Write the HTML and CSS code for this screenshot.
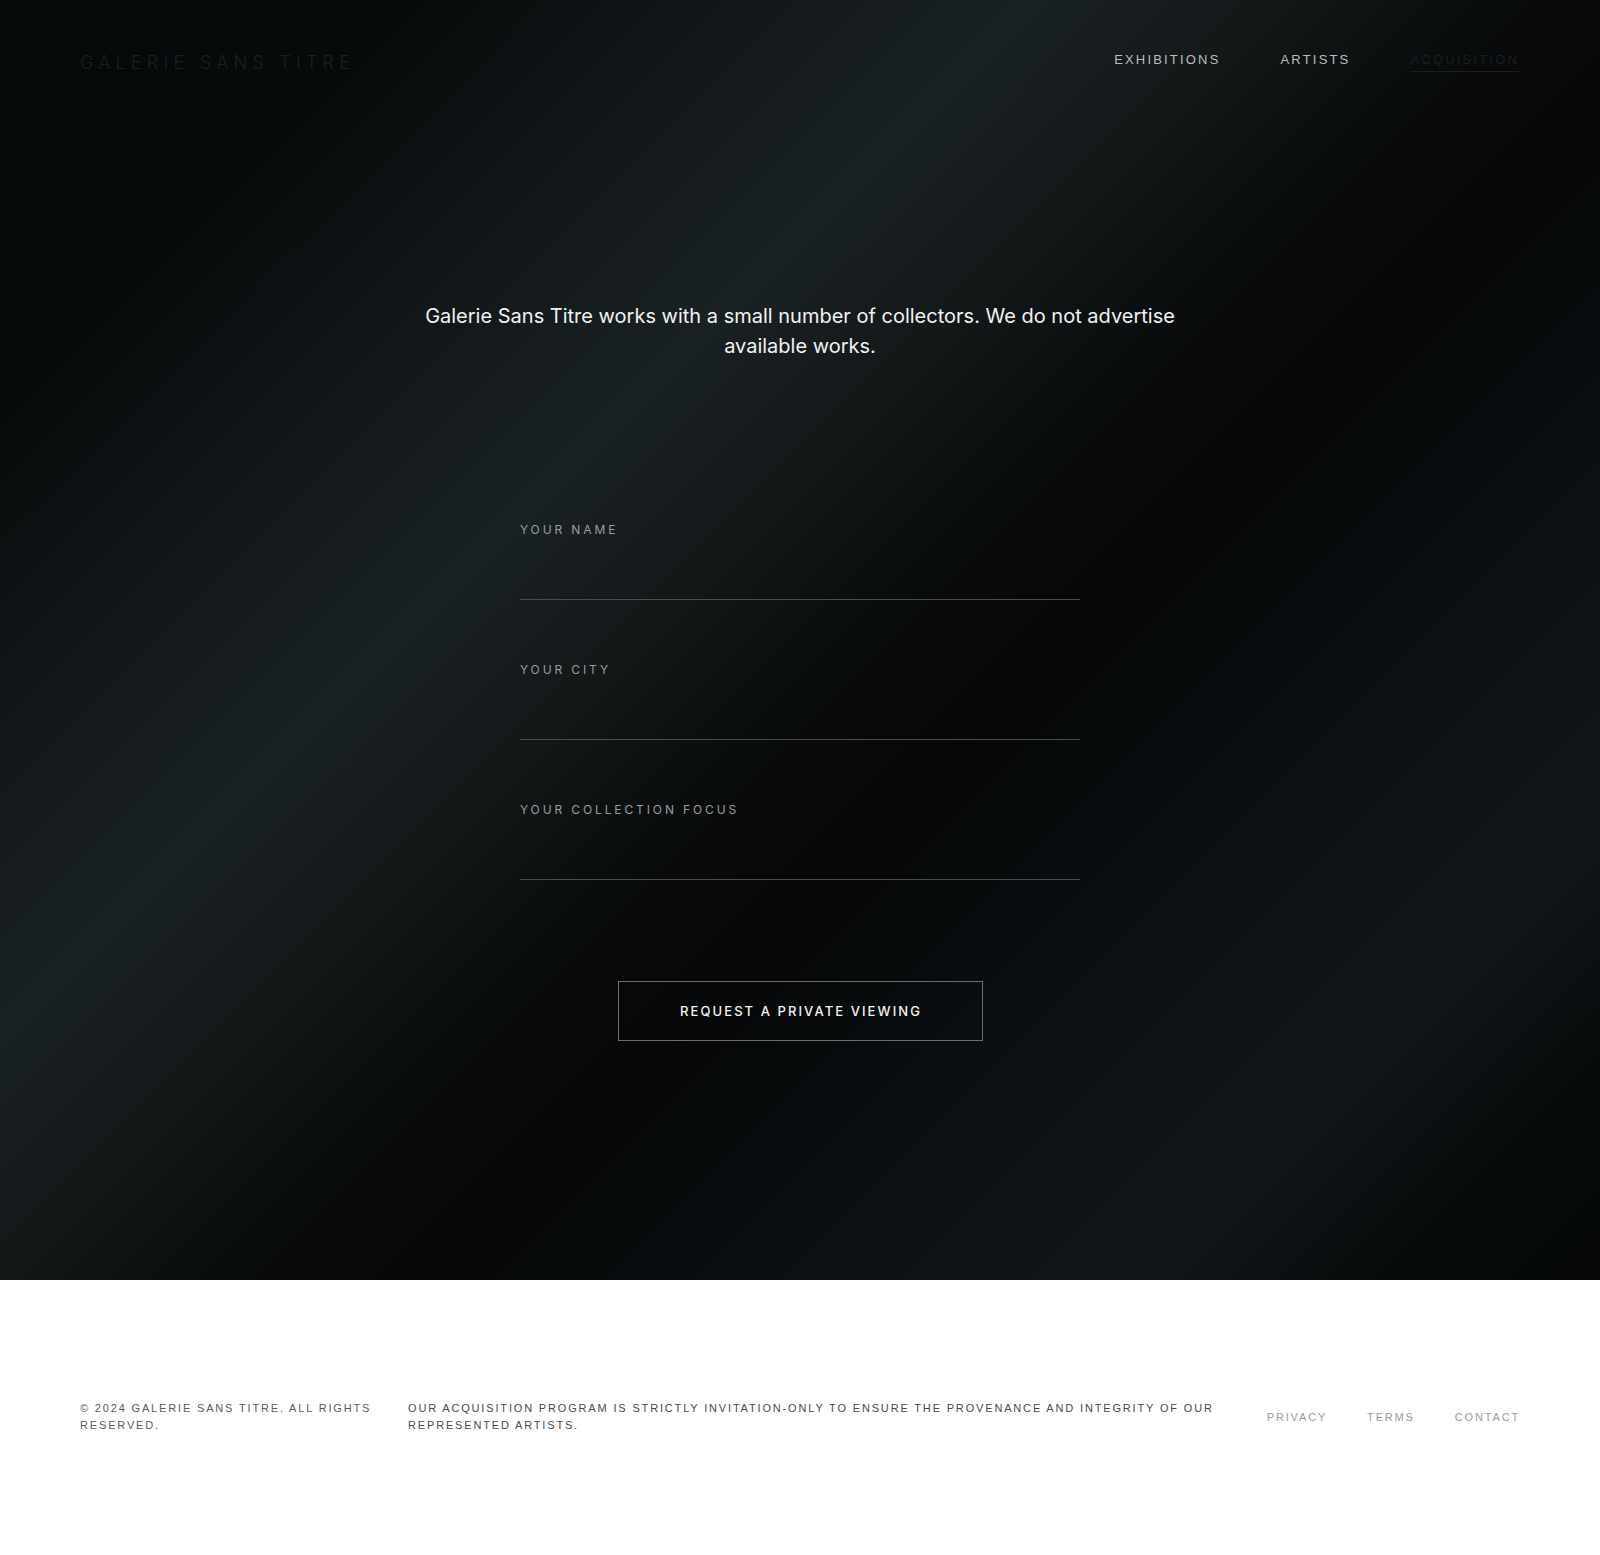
FILE: index.html
```html
<!DOCTYPE html>
<html lang="en">
<head>
<meta charset="utf-8">
<title>Galerie Sans Titre — Acquisition</title>
<link rel="stylesheet" href="styles.css">
</head>
<body>
<section class="hero">
  <header class="site-header">
    <div class="logo">GALERIE SANS TITRE</div>
    <nav class="nav">
      <a class="nav-link" href="#">EXHIBITIONS</a>
      <a class="nav-link" href="#">ARTISTS</a>
      <a class="nav-link is-active" href="#">ACQUISITION</a>
    </nav>
  </header>
  <main class="content">
    <p class="intro">Galerie Sans Titre works with a small number of collectors. We do not advertise available works.</p>
    <form class="form">
      <label class="field">
        <span class="field-label">YOUR NAME</span>
        <input class="field-input" type="text">
      </label>
      <label class="field">
        <span class="field-label">YOUR CITY</span>
        <input class="field-input" type="text">
      </label>
      <label class="field">
        <span class="field-label">YOUR COLLECTION FOCUS</span>
        <input class="field-input" type="text">
      </label>
      <button class="submit" type="button">REQUEST A PRIVATE VIEWING</button>
    </form>
  </main>
</section>
<footer class="site-footer">
  <p class="footer-copy">© 2024 GALERIE SANS TITRE. ALL RIGHTS RESERVED.</p>
  <p class="footer-note">OUR ACQUISITION PROGRAM IS STRICTLY INVITATION-ONLY TO ENSURE THE PROVENANCE AND INTEGRITY OF OUR REPRESENTED ARTISTS.</p>
  <nav class="footer-links">
    <a class="footer-link" href="#">PRIVACY</a>
    <a class="footer-link" href="#">TERMS</a>
    <a class="footer-link" href="#">CONTACT</a>
  </nav>
</footer>
</body>
</html>
```
FILE: styles.css
```css
* { box-sizing: border-box; }
html, body { margin: 0; padding: 0; }
body {
  background: #ffffff;
  font-family: Inter, "Noto Sans", sans-serif;
}

.hero {
  height: 1280px;
  background:
    linear-gradient(135deg,
      #060909 0%,
      #070a0b 14%,
      #141a1c 28%,
      #1a2123 36%,
      #131819 44%,
      #07090a 54%,
      #050708 60%,
      #0c1012 72%,
      #111618 84%,
      #070a0b 93%,
      #050707 100%);
  display: flex;
  flex-direction: column;
}

.site-header {
  display: flex;
  justify-content: space-between;
  align-items: flex-start;
  padding: 52px 81px 0 80px;
}
.logo {
  font-family: Inter, sans-serif;
  font-weight: 300;
  font-size: 18px;
  line-height: 22px;
  letter-spacing: 0.29em;
  color: #1b1f20;
}
.nav {
  display: flex;
  gap: 60px;
}
.nav-link {
  font-family: "Liberation Sans", Arial, sans-serif;
  font-size: 13px;
  line-height: 16px;
  letter-spacing: 0.168em;
  color: #bdbdbd;
  text-decoration: none;
  padding-bottom: 3px;
  border-bottom: 1px solid transparent;
}
.nav-link.is-active {
  color: #1b1f21;
  border-bottom-color: #1b1f21;
}

.content {
  display: flex;
  flex-direction: column;
  align-items: center;
  padding-top: 227px;
}
.intro {
  margin: 0;
  max-width: 780px;
  text-align: center;
  font-size: 20px;
  line-height: 30px;
  color: #f2f2f2;
}

.form {
  width: 560px;
  margin-top: 161px;
  display: flex;
  flex-direction: column;
}
.field {
  display: flex;
  flex-direction: column;
  margin-bottom: 62px;
}
.field-label {
  font-size: 12px;
  line-height: 16px;
  letter-spacing: 0.24em;
  color: #9c9c9c;
}
.field-input {
  height: 62px;
  background: transparent;
  border: 0;
  border-bottom: 1px solid #4a4d4e;
  color: #f2f2f2;
  font: inherit;
  outline: none;
  padding: 0;
}
.submit {
  align-self: center;
  margin-top: 39px;
  width: 365px;
  height: 60px;
  background: transparent;
  border: 1px solid #6b6d6e;
  color: #f4f4f4;
  font-family: Inter, sans-serif;
  font-weight: 500;
  font-size: 13px;
  letter-spacing: 0.16em;
  padding: 0 0 0 2px;
  cursor: pointer;
}

.site-footer {
  display: flex;
  align-items: center;
  gap: 30px;
  padding: 120px 80px 121px 80px;
  font-family: "Liberation Sans", Arial, sans-serif;
  font-size: 11px;
  line-height: 17px;
  letter-spacing: 0.167em;
}
.footer-copy {
  margin: 0;
  flex: 0 0 298px;
  color: #5a5a5a;
}
.footer-note {
  margin: 0;
  flex: 1;
  color: #4a4a4a;
}
.footer-links {
  display: flex;
  gap: 40px;
  margin-left: 10px;
}
.footer-link {
  color: #9a9a9a;
  text-decoration: none;
}
```
